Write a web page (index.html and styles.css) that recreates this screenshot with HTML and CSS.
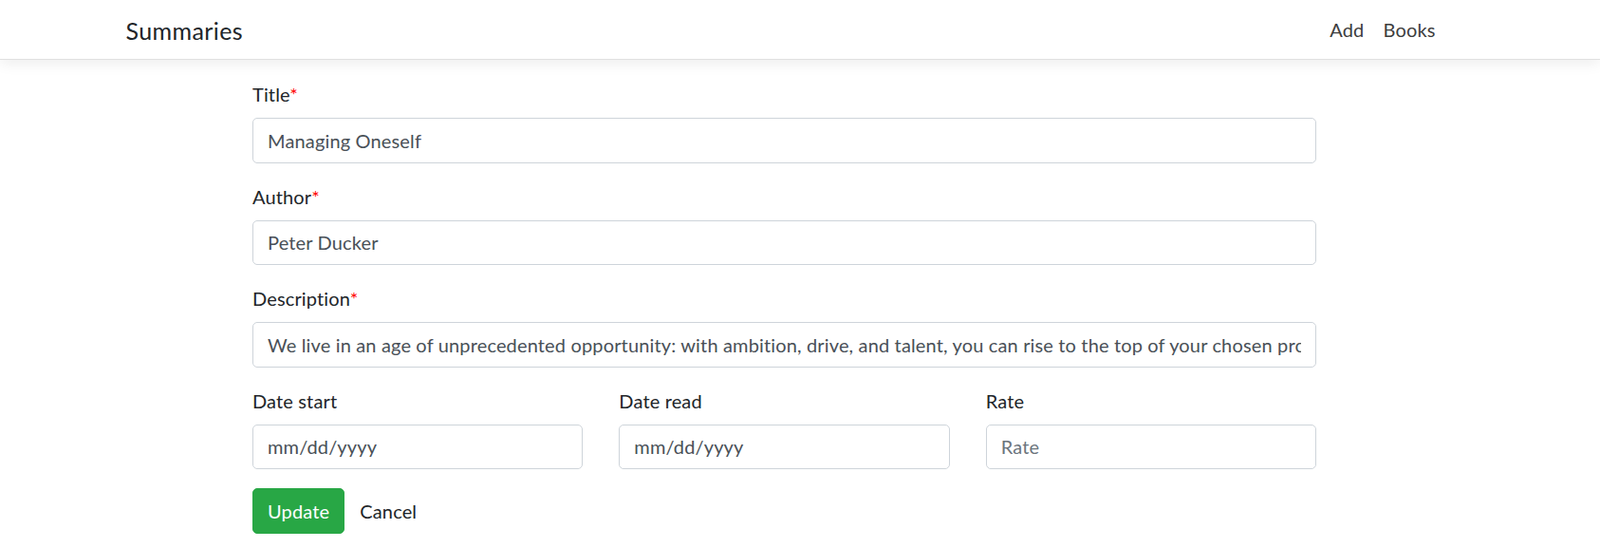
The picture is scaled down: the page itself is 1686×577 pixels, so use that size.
FILE: index.html
```html
<!DOCTYPE html>
<html lang="en">
<head>
<meta charset="utf-8">
<title>Summaries</title>
<link rel="stylesheet" href="styles.css">
</head>
<body>
<header class="navbar">
  <div class="nav-inner">
    <a class="brand" href="#">Summaries</a>
    <nav class="nav-links">
      <a class="nav-link" href="#">Add</a>
      <a class="nav-link" href="#">Books</a>
    </nav>
  </div>
</header>
<main class="container">
  <form class="book-form">
    <div class="form-group">
      <label class="label">Title<span class="req">*</span></label>
      <input class="form-control" type="text" value="Managing Oneself">
    </div>
    <div class="form-group">
      <label class="label">Author<span class="req">*</span></label>
      <input class="form-control" type="text" value="Peter Ducker">
    </div>
    <div class="form-group">
      <label class="label">Description<span class="req">*</span></label>
      <input class="form-control" type="text" value="We live in an age of unprecedented opportunity: with ambition, drive, and talent, you can rise to the top of your chosen profession, regardless of where you started out.">
    </div>
    <div class="form-row">
      <div class="form-group">
        <label class="label">Date start</label>
        <input class="form-control" type="text" value="mm/dd/yyyy">
      </div>
      <div class="form-group">
        <label class="label">Date read</label>
        <input class="form-control" type="text" value="mm/dd/yyyy">
      </div>
      <div class="form-group">
        <label class="label">Rate</label>
        <input class="form-control" type="text" placeholder="Rate">
      </div>
    </div>
    <div class="actions">
      <button class="btn btn-success" type="button">Update</button>
      <a class="btn btn-cancel" href="#">Cancel</a>
    </div>
  </form>
</main>
</body>
</html>
```
FILE: styles.css
```css
* { box-sizing: border-box; }
body {
  margin: 0;
  font-family: Lato, "Open Sans", sans-serif;
  font-size: 20px;
  line-height: 30px;
  letter-spacing: 0.15px;
  color: #212529;
  background: #fff;
}
.navbar {
  height: 63px;
  border-bottom: 1px solid #e0e0e0;
  box-shadow: 0 4px 14px rgba(0,0,0,0.07);
  background: #fff;
}
.nav-inner {
  width: 1425px;
  margin: 0 auto;
  height: 62px;
  display: flex;
  align-items: center;
  justify-content: space-between;
  padding-left: 2px;
  padding-right: 33px;
}
.brand {
  font-size: 25px;
  line-height: 37px;
  letter-spacing: 0.4px;
  color: #212529;
  text-decoration: none;
  padding-top: 2px;
}
.nav-links { display: flex; }
.nav-link {
  color: #3d3d3d;
  text-decoration: none;
  padding: 0 10px;
  font-size: 20px;
}
.container {
  width: 1425px;
  margin: 0 auto;
  padding-top: 21px;
  padding-left: 135.5px;
}
.book-form { width: 1121px; }
.form-group { margin-bottom: 20px; }
.label {
  display: block;
  margin-bottom: 10px;
  line-height: 30px;
}
.req { color: #ff0000; }
.form-control {
  display: block;
  width: 100%;
  height: 47.5px;
  padding: 7.5px 15px;
  font-family: inherit;
  font-size: 20px;
  line-height: 30px;
  letter-spacing: 0.15px;
  color: #495057;
  background: #fff;
  border: 1.25px solid #ced4da;
  border-radius: 5px;
  outline: none;
}
.form-control::placeholder { color: #6c757d; opacity: 1; }
.form-row {
  display: grid;
  grid-template-columns: 1fr 1fr 1fr;
  column-gap: 38px;
}
.actions { display: flex; align-items: center; }
.btn {
  display: inline-block;
  height: 47.5px;
  padding: 7.5px 15px;
  font-family: inherit;
  font-size: 20px;
  line-height: 30px;
  letter-spacing: 0.15px;
  border-radius: 5px;
  border: 1.25px solid transparent;
  text-decoration: none;
}
.btn-success {
  background: #28a745;
  border-color: #28a745;
  color: #fff;
}
.btn-cancel { color: #212529; }
```
